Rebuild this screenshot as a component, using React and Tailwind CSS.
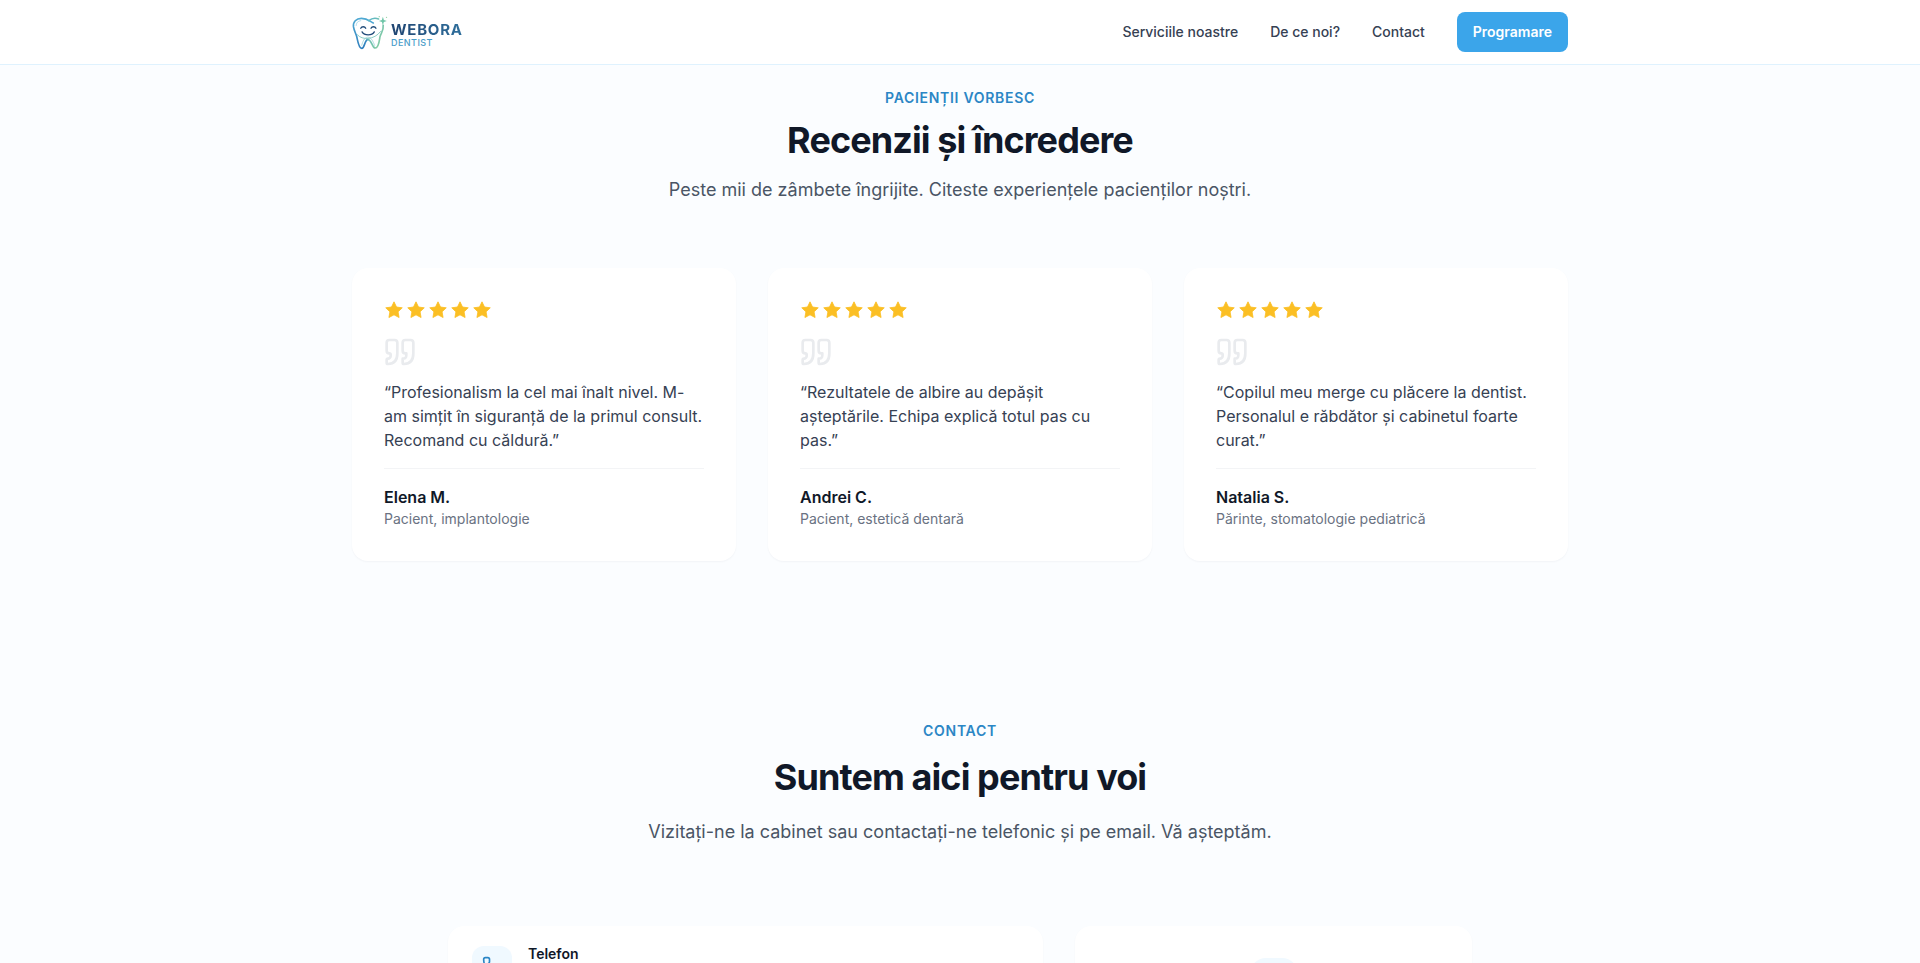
import React from "react";
import { Phone, Clock, Star } from "lucide-react";

const navLinks = [
  { label: "Serviciile noastre", href: "#servicii" },
  { label: "De ce noi?", href: "#de-ce-noi" },
  { label: "Contact", href: "#contact" },
];

const reviews = [
  {
    name: "Elena M.",
    role: "Pacient, implantologie",
    text: "Profesionalism la cel mai înalt nivel. M-am simțit în siguranță de la primul consult. Recomand cu căldură.",
  },
  {
    name: "Andrei C.",
    role: "Pacient, estetică dentară",
    text: "Rezultatele de albire au depășit așteptările. Echipa explică totul pas cu pas.",
  },
  {
    name: "Natalia S.",
    role: "Părinte, stomatologie pediatrică",
    text: "Copilul meu merge cu plăcere la dentist. Personalul e răbdător și cabinetul foarte curat.",
  },
];

const ToothIcon = () => (
  <svg
    viewBox="36 44 108 106"
    className="h-[35px] w-9"
    fill="none"
    strokeLinecap="round"
    strokeLinejoin="round"
    aria-hidden="true"
  >
    <defs>
      <linearGradient id="toothLeft" x1="0" y1="0" x2="0" y2="1">
        <stop offset="0" stopColor="#4fa9d3" />
        <stop offset="1" stopColor="#2f7fbd" />
      </linearGradient>
      <linearGradient id="toothRight" x1="0" y1="0" x2="1" y2="1">
        <stop offset="0" stopColor="#5bb5c8" />
        <stop offset="1" stopColor="#8bd09b" />
      </linearGradient>
    </defs>
    <path
      d="M100 68C91 65 84 54 64 54C48 54 38 65 40 80C42 92 47 99 50 110C53 124 56 145 65 145C74 145 73 120 84 118"
      stroke="url(#toothLeft)"
      strokeWidth="5"
    />
    <path d="M48 76C48 68 53 62 62 61" stroke="#8ccbe3" strokeWidth="2" />
    <path
      d="M86 61C95 54 106 52 116 56M130 75C132 92 122 100 120 111C118 124 116 144 106 144C96 144 97 121 84 118"
      stroke="url(#toothRight)"
      strokeWidth="5"
    />
    <path
      d="M52 104C66 121 103 120 122 94"
      stroke="#8accc2"
      strokeWidth="3"
    />
    <path
      d="M65 136C68 124 72 113 83 111C94 112 99 123 104 136"
      stroke="#8accd0"
      strokeWidth="2"
    />
    <path
      d="M62 84C65 78 74 78 77 84M93 84C96 78 105 78 108 84"
      stroke="#1f4a78"
      strokeWidth="4"
    />
    <path d="M66 95C73 107 96 107 103 95" stroke="#1f4a78" strokeWidth="4" />
    <path
      d="M129 49L132 59L141 62L132 65L129 75L126 65L117 62L126 59Z"
      fill="#6fc5a8"
    />
    <circle cx="140" cy="51" r="2" fill="#93d3a2" />
    <circle cx="118" cy="49" r="2" fill="#93d3a2" />
  </svg>
);

const Logo = () => (
  <a href="#acasa" className="flex items-center gap-[3px]">
    <ToothIcon />
    <span className="flex flex-col gap-px pt-1">
      <span className="bg-linear-to-r from-[#1f4471] to-[#2f6f9c] bg-clip-text text-[15px] leading-4 font-bold tracking-wider text-transparent">
        WEBORA
      </span>
      <span className="text-[9px] leading-2 font-medium tracking-wider text-[#4a9dc9]">
        DENTIST
      </span>
    </span>
  </a>
);

const Header = () => (
  <header className="shrink-0 border-b border-sky-100 bg-white">
    <div className="mx-auto flex h-16 w-full max-w-7xl items-center justify-between px-8">
      <Logo />
      <nav className="flex items-center gap-8 text-sm font-medium text-gray-700">
        {navLinks.map((link) => (
          <a key={link.href} href={link.href} className="hover:text-sky-600">
            {link.label}
          </a>
        ))}
        <button
          type="button"
          className="h-10 rounded-lg bg-[#3ba5ea] px-4 font-semibold text-white hover:bg-sky-600"
        >
          Programare
        </button>
      </nav>
    </div>
  </header>
);

const QuoteIcon = () => (
  <svg
    viewBox="0 0 24 24"
    className="mt-4 size-8 text-[#e9ebee]"
    fill="none"
    stroke="currentColor"
    strokeWidth="2"
    strokeLinecap="round"
    strokeLinejoin="round"
    aria-hidden="true"
  >
    <path d="M3 21c3 0 7-1 7-8V5c0-1.25-.756-2.017-2-2H4c-1.25 0-2 .75-2 1.972V11c0 1.25.75 2 2 2 1 0 1 0 1 1v1c0 1-1 2-2 2s-1 .008-1 1.031V20c0 1 0 1 1 1z" />
    <path d="M15 21c3 0 7-1 7-8V5c0-1.25-.757-2.017-2-2h-4c-1.25 0-2 .75-2 1.972V11c0 1.25.75 2 2 2h.75c0 2.25.25 4-2.75 4v3c0 1 0 1 1 1z" />
  </svg>
);

const ReviewCard = ({ review }) => (
  <article className="rounded-2xl bg-white p-8 shadow-[0_1px_2px_rgba(15,23,42,0.04)]">
    <div className="flex gap-0.5" role="img" aria-label="5 din 5 stele">
      {[1, 2, 3, 4, 5].map((n) => (
        <svg key={n} viewBox="0 0 24 24" className="size-5 fill-[#fbbf24]">
          <path
            d="M12 2.2l3 6.2 6.9 1-5 4.8 1.2 6.8-6.1-3.2L5.900 21l1.200-6.800-5-4.800 6.900-1z"
            className="stroke-[#fbbf24]"
            strokeWidth="1"
            strokeLinejoin="round"
          />
        </svg>
      ))}
    </div>
    <QuoteIcon />
    <p className="mt-3 text-base text-gray-700">{`“${review.text}”`}</p>
    <div className="mt-4 border-t border-gray-100 pt-4">
      <p className="font-semibold text-gray-900">{review.name}</p>
      <p className="text-sm text-gray-500">{review.role}</p>
    </div>
  </article>
);

const Reviews = () => (
  <section
    id="recenzii"
    className="mx-auto w-full max-w-7xl px-8 pt-[23px] pb-24"
  >
    <div className="text-center">
      <p className="text-sm font-semibold tracking-wider text-[#2b86c5] uppercase">
        Pacienții vorbesc
      </p>
      <h2 className="mt-3 text-4xl font-bold tracking-tight text-gray-900">
        Recenzii și încredere
      </h2>
      <p className="mt-4 text-lg text-gray-600">
        Peste mii de zâmbete îngrijite. Citeste experiențele pacienților noștri.
      </p>
    </div>
    <div className="mt-16 grid grid-cols-3 gap-8">
      {reviews.map((review) => (
        <ReviewCard key={review.name} review={review} />
      ))}
    </div>
  </section>
);

const Contact = () => (
  <section id="contact" className="mx-auto w-full max-w-7xl px-8 pt-16">
    <div className="text-center">
      <p className="text-sm font-semibold tracking-wider text-[#2b86c5] uppercase">
        Contact
      </p>
      <h2 className="mt-4 text-4xl font-bold tracking-tight text-gray-900">
        Suntem aici pentru voi
      </h2>
      <p className="mt-[21px] text-lg text-gray-600">
        Vizitați-ne la cabinet sau contactați-ne telefonic și pe email. Vă
        așteptăm.
      </p>
    </div>
    <div className="mx-auto mt-20 grid max-w-5xl grid-cols-[3fr_2fr] gap-8">
      <div className="rounded-2xl bg-white px-6 py-4 shadow-[0_1px_2px_rgba(15,23,42,0.04)]">
        <div className="flex items-start gap-4">
          <div className="mt-1 flex size-10 items-center justify-center rounded-xl bg-sky-50">
            <Phone size={20} className="text-[#2b86c5]" />
          </div>
          <h3 className="text-sm leading-6 font-semibold text-gray-900">
            Telefon
          </h3>
        </div>
      </div>
      <div className="flex flex-col items-center rounded-2xl bg-white p-8 shadow-[0_1px_2px_rgba(15,23,42,0.04)]">
        <div className="flex size-12 items-center justify-center rounded-2xl bg-sky-50">
          <Clock size={24} className="text-[#2b86c5]" />
        </div>
      </div>
    </div>
  </section>
);

const App = () => {
  return (
    <div className="flex h-screen flex-col overflow-hidden bg-[#fbfdff] font-['Inter',sans-serif]">
      <Header />
      <main className="min-h-0 flex-1 overflow-hidden">
        <Reviews />
        <Contact />
      </main>
    </div>
  );
};

export default App;
